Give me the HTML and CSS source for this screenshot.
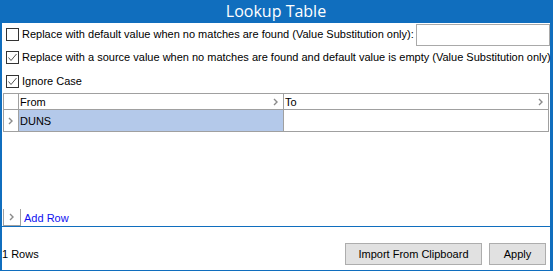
FILE: index.html
```html
<!DOCTYPE html>
<html lang="en">
<head>
    <meta charset="UTF-8">
    <meta name="viewport" content="width=device-width, initial-scale=1.0">
    <title>Lookup Table</title>
    <link rel="stylesheet" href="styles.css">
</head>
<body>
    <div class="window">
        <div class="titlebar">Lookup Table</div>
        <div class="content">
            <div class="options">
                <div class="option option-first">
                    <label class="check">
                        <span class="box"></span>
                        <span>Replace with default value when no matches are found (Value Substitution only):</span>
                    </label>
                    <input type="text" class="default-value">
                </div>
                <div class="option">
                    <label class="check">
                        <span class="box"><svg width="11" height="11" viewBox="0 0 11 11"><polyline points="1.5,5.5 4,8.5 9.5,2" fill="none" stroke="#555" stroke-width="1"/></svg></span>
                        <span>Replace with a source value when no matches are found and default value is empty (Value Substitution only)</span>
                    </label>
                </div>
                <div class="option">
                    <label class="check">
                        <span class="box"><svg width="11" height="11" viewBox="0 0 11 11"><polyline points="1.5,5.5 4,8.5 9.5,2" fill="none" stroke="#555" stroke-width="1"/></svg></span>
                        <span>Ignore Case</span>
                    </label>
                </div>
            </div>

            <div class="grid-panel">
                <div class="grid">
                    <div class="cell head rowhead"></div>
                    <div class="cell head">From<svg class="chev" width="6" height="8" viewBox="0 0 6 8"><polyline points="1,1 4,4 1,7" fill="none" stroke="#8a8a8a" stroke-width="1.4"/></svg></div>
                    <div class="cell head">To<svg class="chev" width="6" height="8" viewBox="0 0 6 8"><polyline points="1,1 4,4 1,7" fill="none" stroke="#8a8a8a" stroke-width="1.4"/></svg></div>

                    <div class="cell rowhead"><svg width="6" height="8" viewBox="0 0 6 8"><polyline points="1,1 4,4 1,7" fill="none" stroke="#8a8a8a" stroke-width="1.4"/></svg></div>
                    <div class="cell selected">DUNS</div>
                    <div class="cell"></div>
                </div>
                <div class="add-row">
                    <span class="add-head"><svg width="6" height="8" viewBox="0 0 6 8"><polyline points="1,1 4,4 1,7" fill="none" stroke="#8a8a8a" stroke-width="1.4"/></svg></span>
                    <a href="#" class="add-link">Add Row</a>
                </div>
            </div>

            <div class="footer">
                <span class="row-count">1 Rows</span>
                <div class="buttons">
                    <button class="btn btn-import">Import From Clipboard</button>
                    <button class="btn btn-apply">Apply</button>
                </div>
            </div>
        </div>
    </div>
</body>
</html>
```

FILE: styles.css
```css
body {
    margin: 0;
    padding: 0;
    font-family: "Liberation Sans", Arial, sans-serif;
    font-size: 11px;
    color: #000;
    background-color: #fff;
}
.window {
    width: 553px;
    height: 271px;
    box-sizing: border-box;
    background-color: #106ebe;
    padding: 0 3px 1px 2px;
    display: flex;
    flex-direction: column;
}
.titlebar {
    height: 23px;
    line-height: 22px;
    text-align: center;
    color: #fff;
    font-size: 16px;
    font-family: "Open Sans", "Noto Sans", sans-serif;
}
.content {
    flex: 1;
    background-color: #fff;
    display: flex;
    flex-direction: column;
}
.options {
    display: flex;
    flex-direction: column;
}
.option {
    height: 24px;
    display: flex;
    align-items: center;
    padding-left: 4px;
}
.option-first {
    height: 22px;
    justify-content: space-between;
}
.check {
    display: flex;
    align-items: center;
    gap: 3px;
    white-space: nowrap;
}
.box {
    width: 13px;
    height: 13px;
    box-sizing: border-box;
    border: 1px solid #333;
    background-color: #fff;
    display: flex;
    align-items: center;
    justify-content: center;
}
.default-value {
    align-self: flex-start;
    margin-top: 1px;
    width: 134px;
    height: 22px;
    box-sizing: border-box;
    border: 1px solid #a9a9a9;
    padding: 0;
    margin-right: 0;
}
.grid-panel {
    flex: 1;
    display: flex;
    flex-direction: column;
    justify-content: space-between;
    border-bottom: 1px solid #106ebe;
    padding-left: 1px;
}
.grid {
    display: grid;
    grid-template-columns: 15px 265px 265px;
    grid-template-rows: 16px 22px;
    width: 546px;
    box-sizing: border-box;
    border-top: 1px solid #a0a0a0;
    border-left: 1px solid #a0a0a0;
}
.cell {
    box-sizing: border-box;
    border-right: 1px solid #a0a0a0;
    border-bottom: 1px solid #a0a0a0;
    display: flex;
    align-items: center;
    padding-left: 1px;
    line-height: 14px;
}
.cell.head {
    justify-content: space-between;
    padding-right: 4px;
}
.cell.rowhead {
    justify-content: center;
    padding: 0;
}
.selected {
    background-color: #b4c9ea;
}
.add-row {
    display: flex;
    align-items: flex-end;
    gap: 3px;
}
.add-head {
    width: 18px;
    height: 17px;
    box-sizing: border-box;
    border-left: 1px solid #a0a0a0;
    border-right: 1px solid #a0a0a0;
    border-bottom: 1px solid #a0a0a0;
    display: flex;
    align-items: center;
    justify-content: center;
}
.add-link {
    color: #1010f0;
    text-decoration: none;
    line-height: 16px;
}
.footer {
    height: 43px;
    display: flex;
    justify-content: space-between;
    align-items: center;
    padding-right: 4px;
}
.row-count {
    margin-top: 10px;
}
.buttons {
    display: flex;
    gap: 7px;
    margin-top: 10px;
}
.btn {
    height: 22px;
    background-color: #e1e1e1;
    border: 1px solid #adadad;
    font-family: "Liberation Sans", Arial, sans-serif;
    font-size: 11px;
    color: #000;
    padding: 0;
}
.btn-import {
    width: 137px;
}
.btn-apply {
    width: 57px;
}
```
